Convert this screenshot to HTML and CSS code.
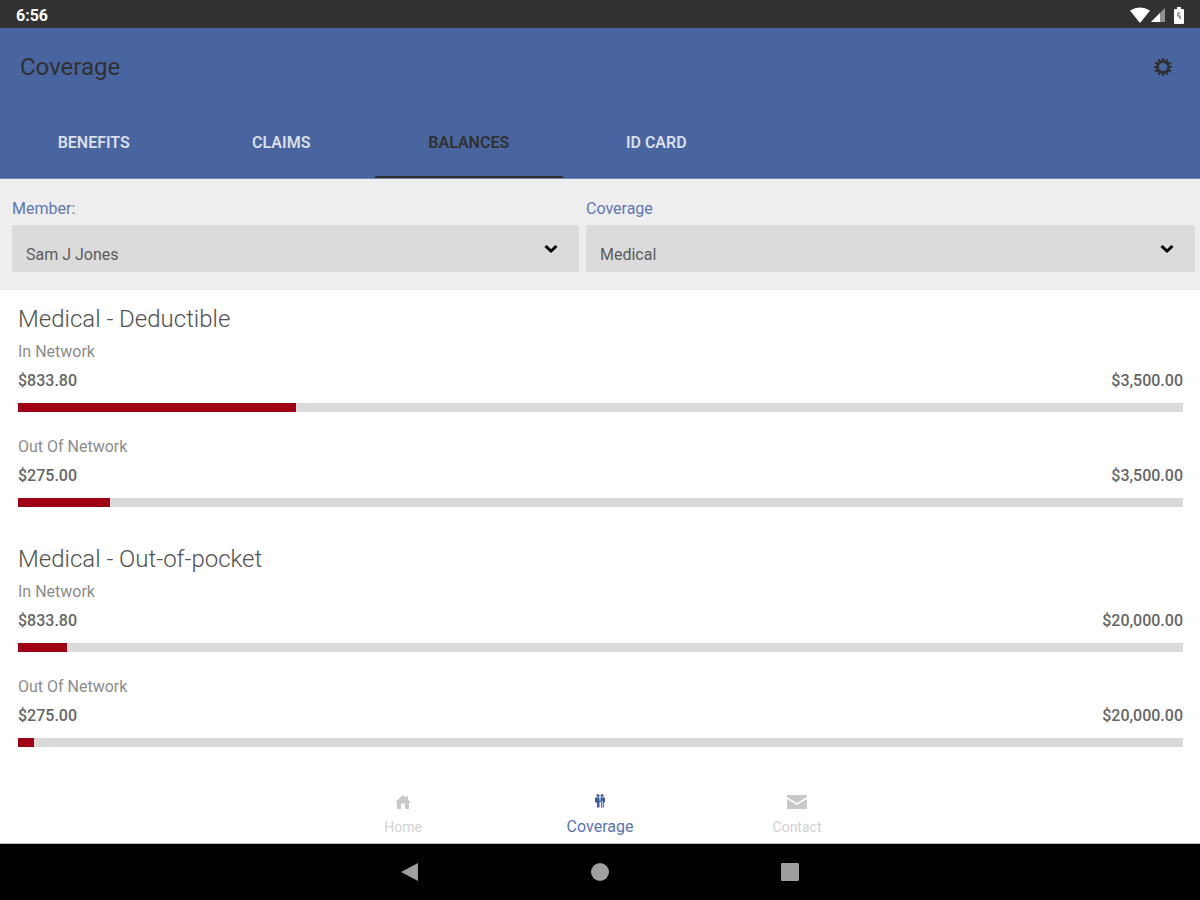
FILE: index.html
```html
<!DOCTYPE html>
<html lang="en">
<head>
<meta charset="utf-8">
<meta name="viewport" content="width=device-width, initial-scale=1">
<title>Coverage</title>
<link rel="stylesheet" href="styles.css">
</head>
<body>
<div class="app">
  <div class="status-bar">
    <span class="clock">6:56</span>
    <div class="status-icons">
      <svg width="20" height="16" viewBox="0 0 20 16" aria-label="Wi-Fi"><path fill="#fff" d="M0 3.5Q10-2.500 20 3.500L10.500 15.500H9.500Z"/></svg>
      <svg width="14" height="14" viewBox="0 0 14 14" aria-label="Signal"><path fill="#909090" d="M14 0V14H0Z"/><path fill="#fff" d="M9 5V14H0Z"/></svg>
      <svg class="battery" width="10" height="17" viewBox="0 0 10 17" aria-label="Battery"><path fill="#fff" d="M3 0H7V2H9Q10 2 10 3V16Q10 17 9 17H1Q0 17 0 16V3Q0 2 1 2H3Z"/><path fill="none" stroke="#666" stroke-width="1.200" d="M6.500 6H4V9H6V12"/></svg>
    </div>
  </div>

  <header class="app-header">
    <div class="title-row">
      <h1 class="app-title">Coverage</h1>
      <button class="settings" type="button" aria-label="Settings">
        <svg width="20" height="20" viewBox="0 0 20 20"><g stroke="#303030" fill="none"><circle cx="10" cy="10" r="5.500" stroke-width="2.800"/><path stroke-width="2.200" d="M10 1V4M10 16V19M1 10H4M16 10H19M5.500 2.200L7 4.800M13 15.200L14.500 17.800M2.200 5.500L4.800 7M15.200 13L17.800 14.500M14.500 2.200L13 4.800M7 15.200L5.500 17.800M17.800 5.500L15.200 7M4.800 13L2.200 14.500"/></g></svg>
      </button>
    </div>
    <nav class="tabs">
      <button class="tab" type="button">BENEFITS</button>
      <button class="tab" type="button">CLAIMS</button>
      <button class="tab tab-active" type="button" aria-current="page">BALANCES</button>
      <button class="tab" type="button">ID CARD</button>
    </nav>
  </header>

  <form class="filters">
    <div class="field">
      <label class="field-label" for="member">Member:</label>
      <div class="select-wrap">
        <select class="select" id="member"><option>Sam J Jones</option></select>
        <svg class="chevron" width="14" height="10" viewBox="0 0 14 10"><path fill="none" stroke="#000" stroke-width="3" d="M1.500 2L7 7L12.500 2"/></svg>
      </div>
    </div>
    <div class="field">
      <label class="field-label" for="coverage">Coverage</label>
      <div class="select-wrap">
        <select class="select" id="coverage"><option>Medical</option></select>
        <svg class="chevron" width="14" height="10" viewBox="0 0 14 10"><path fill="none" stroke="#000" stroke-width="3" d="M1.500 2L7 7L12.500 2"/></svg>
      </div>
    </div>
  </form>

  <main class="balances">
    <section class="plan">
      <h2 class="plan-title">Medical - Deductible</h2>
      <div class="balance">
        <div class="network">In Network</div>
        <div class="amounts"><span>$833.80</span><span>$3,500.00</span></div>
        <div class="meter"><div class="meter-fill" style="width:23.82%"></div></div>
      </div>
      <div class="balance">
        <div class="network">Out Of Network</div>
        <div class="amounts"><span>$275.00</span><span>$3,500.00</span></div>
        <div class="meter"><div class="meter-fill" style="width:7.86%"></div></div>
      </div>
    </section>
    <section class="plan">
      <h2 class="plan-title">Medical - Out-of-pocket</h2>
      <div class="balance">
        <div class="network">In Network</div>
        <div class="amounts"><span>$833.80</span><span>$20,000.00</span></div>
        <div class="meter"><div class="meter-fill" style="width:4.17%"></div></div>
      </div>
      <div class="balance">
        <div class="network">Out Of Network</div>
        <div class="amounts"><span>$275.00</span><span>$20,000.00</span></div>
        <div class="meter"><div class="meter-fill" style="width:1.38%"></div></div>
      </div>
    </section>
  </main>

  <nav class="bottom-nav">
    <button class="nav-item" type="button">
      <svg width="16" height="16" viewBox="0 0 16 16"><path fill="#c8c8c8" d="M8 1L11 3.800V2H13V5.700L16 8.500H14V15H10V9.500H6V15H2V8.500H0Z"/></svg>
      <span>Home</span>
    </button>
    <button class="nav-item nav-active" type="button" aria-current="page">
      <svg width="10" height="16" viewBox="0 0 10 16"><g fill="#3c5c9e"><circle cx="3" cy="1.500" r="1.500"/><circle cx="7" cy="1.500" r="1.500"/><path d="M0 3.500H10V8.500H8.800V13.500H5.900V8H4.500V13.500H2V8.500H0Z"/></g><path stroke="#dfe7f6" d="M5 3.500V7M7.300 7V13"/></svg>
      <span>Coverage</span>
    </button>
    <button class="nav-item" type="button">
      <svg width="20" height="16" viewBox="0 0 20 16"><path fill="#c8c8c8" d="M0 1H20V3L10 9L0 3ZM0 5L10 11L20 5V15H0Z"/></svg>
      <span>Contact</span>
    </button>
  </nav>

  <div class="system-bar">
    <button class="system-button" type="button" aria-label="Back"><svg width="20" height="20" viewBox="0 0 20 20"><path fill="#9e9e9e" d="M18 1V19L1 10Z"/></svg></button>
    <button class="system-button" type="button" aria-label="Home"><svg width="20" height="20" viewBox="0 0 20 20"><circle fill="#9e9e9e" cx="10" cy="10" r="9"/></svg></button>
    <button class="system-button" type="button" aria-label="Recent apps"><svg width="20" height="20" viewBox="0 0 20 20"><rect fill="#9e9e9e" x="1" y="1" width="18" height="18" rx="1"/></svg></button>
  </div>
</div>
</body>
</html>
```
FILE: styles.css
```css
* { box-sizing: border-box; }

body {
  margin: 0;
  font-family: Roboto, "Liberation Sans", sans-serif;
  font-size: 16px;
  color: #666;
  background: #fff;
}

button {
  margin: 0;
  padding: 0;
  border: 0;
  background: none;
  font: inherit;
  color: inherit;
}

svg { display: block; }

.app {
  display: flex;
  flex-direction: column;
  min-height: 100vh;
}

.status-bar {
  display: flex;
  align-items: center;
  justify-content: space-between;
  height: 28px;
  padding: 2px 16px 0;
  background: #323232;
}

.clock {
  font-weight: 700;
  color: #fff;
}

.status-icons {
  display: flex;
  align-items: center;
  gap: 1px;
}

.battery { margin-left: 8px; }

.app-header {
  background: #48659f;
  border-bottom: 1px solid #7088b5;
}

.title-row {
  display: flex;
  align-items: center;
  justify-content: space-between;
  height: 78px;
  padding: 0 27px 0 20px;
}

.app-title {
  margin: 0;
  font-size: 24px;
  font-weight: 400;
  color: #303030;
}

.tabs { display: flex; }

.tab {
  flex: 0 0 calc(500% / 32);
  height: 72px;
  padding-top: 2px;
  border-bottom: 2px solid transparent;
  font-weight: 600;
  color: #dadfe9;
}

.tab-active {
  border-color: #303030;
  color: #303030;
}

.filters {
  display: grid;
  grid-template-columns: 567fr 609fr;
  gap: 7px;
  padding: 16px 5px 18px 12px;
  background: #eee;
}

.field {
  display: flex;
  flex-direction: column;
  gap: 2px;
}

.field-label {
  line-height: 28px;
  color: #6077ae;
}

.select-wrap { position: relative; }

.select {
  display: block;
  width: 100%;
  height: 47px;
  padding: 12px 48px 0 14px;
  border: 0;
  border-radius: 3px 3px 0 0;
  background: #dbdbdb;
  font: inherit;
  color: #5c5c5c;
  appearance: none;
}

.chevron {
  position: absolute;
  top: 19px;
  right: 21px;
  pointer-events: none;
}

.balances {
  flex: 1;
  display: flex;
  flex-direction: column;
  gap: 36px;
  padding: 13px 17px 16px 18px;
}

.plan-title {
  margin: 0;
  font-size: 24px;
  font-weight: 300;
  line-height: 32px;
  color: #505050;
}

.balance + .balance { margin-top: 18px; }

.network {
  line-height: 34px;
  color: #8c8c8c;
}

.amounts {
  display: flex;
  justify-content: space-between;
  line-height: 24px;
  font-weight: 500;
}

.meter {
  height: 9px;
  margin-top: 10px;
  background: #dadada;
}

.meter-fill {
  height: 100%;
  background: #a00014;
}

.bottom-nav {
  display: flex;
  justify-content: center;
  height: 59px;
  padding-top: 9px;
  border-bottom: 1px solid #bbb;
}

.nav-item {
  display: flex;
  flex-direction: column;
  align-items: center;
  gap: 8px;
  width: 197px;
  font-size: 14px;
  line-height: 18px;
  color: #d2d2d2;
}

.nav-active {
  font-size: 16px;
  color: #5a74ad;
}

.system-bar {
  display: flex;
  align-items: center;
  justify-content: center;
  height: 56px;
  background: #000;
}

.system-button {
  display: flex;
  justify-content: center;
  width: 190px;
}
```
